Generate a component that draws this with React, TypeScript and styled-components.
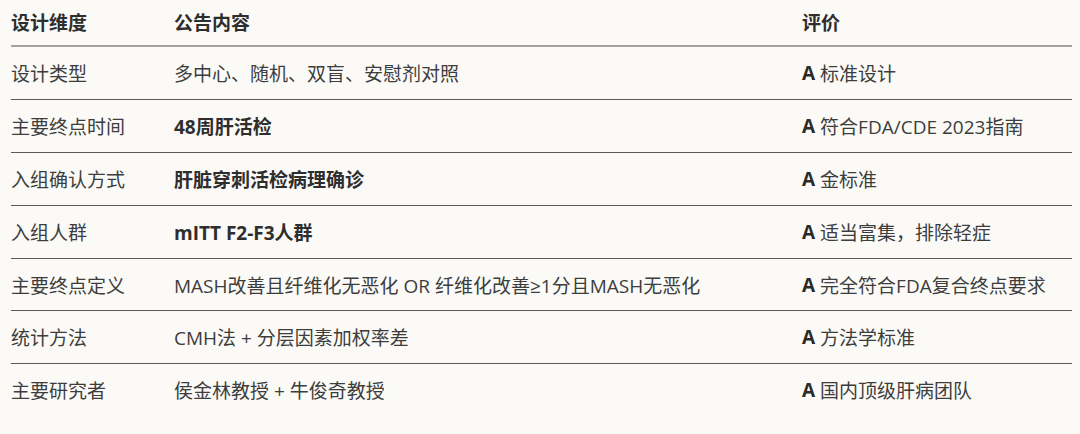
import React from "react";
import styled, { createGlobalStyle } from "styled-components";

const Global = createGlobalStyle`
  html, body { margin: 0; padding: 0; background: #fbfaf7; }
  body { font-family: "Open Sans", "Noto Sans CJK SC", sans-serif; color: #333; }
`;

const Wrap = styled.div`
  padding: 0 8px 0 11px;
  background: #fbfaf7;
`;

const Table = styled.div`
  display: grid;
  grid-template-columns: 163px 628px 1fr;
`;

const HeadCell = styled.div`
  font-weight: 700;
  font-size: 19px;
  color: #2e2e2e;
  height: 47px;
  display: flex;
  align-items: center;
  padding-bottom: 1px;
  box-sizing: border-box;
  border-bottom: 2px solid #a3a29d;
`;

const Cell = styled.div<{ $last?: boolean; $bold?: boolean }>`
  font-size: 19px;
  font-weight: ${(p) => (p.$bold ? 700 : 400)};
  color: ${(p) => (p.$bold ? "#2e2e2e" : "#3d3d3d")};
  height: 51.9px;
  display: flex;
  align-items: center;
  border-bottom: ${(p) => (p.$last ? "none" : "1px solid #5a5a5a")};
  white-space: nowrap;
`;

const Grade = styled.b`
  font-weight: 700;
  color: #2a2a2a;
  margin-right: 5px;
`;

const rows: { dim: string; content: string; bold?: boolean; eval: string }[] = [
  { dim: "设计类型", content: "多中心、随机、双盲、安慰剂对照", eval: "标准设计" },
  { dim: "主要终点时间", content: "48周肝活检", bold: true, eval: "符合FDA/CDE 2023指南" },
  { dim: "入组确认方式", content: "肝脏穿刺活检病理确诊", bold: true, eval: "金标准" },
  { dim: "入组人群", content: "mITT F2-F3人群", bold: true, eval: "适当富集，排除轻症" },
  { dim: "主要终点定义", content: "MASH改善且纤维化无恶化 OR 纤维化改善≥1分且MASH无恶化", eval: "完全符合FDA复合终点要求" },
  { dim: "统计方法", content: "CMH法 + 分层因素加权率差", eval: "方法学标准" },
  { dim: "主要研究者", content: "侯金林教授 + 牛俊奇教授", eval: "国内顶级肝病团队" },
];

export default function App() {
  return (
    <Wrap>
      <Global />
      <Table>
        <HeadCell>设计维度</HeadCell>
        <HeadCell>公告内容</HeadCell>
        <HeadCell>评价</HeadCell>
        {rows.map((r, i) => {
          const last = i === rows.length - 1;
          return (
            <React.Fragment key={r.dim}>
              <Cell $last={last}>{r.dim}</Cell>
              <Cell $last={last} $bold={r.bold}>{r.content}</Cell>
              <Cell $last={last}>
                <Grade>A</Grade>
                {r.eval}
              </Cell>
            </React.Fragment>
          );
        })}
      </Table>
    </Wrap>
  );
}
